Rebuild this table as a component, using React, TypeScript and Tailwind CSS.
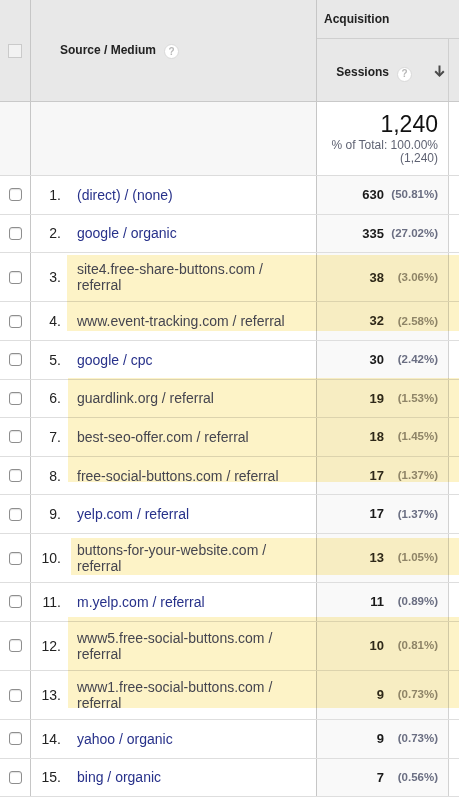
import React from "react";

type Row = { n: number; src: string[]; v: number; p: string; hl?: boolean };

const rows: Row[] = [
  { n: 1, src: ["(direct) / (none)"], v: 630, p: "50.81%" },
  { n: 2, src: ["google / organic"], v: 335, p: "27.02%" },
  { n: 3, src: ["site4.free-share-buttons.com /", "referral"], v: 38, p: "3.06%", hl: true },
  { n: 4, src: ["www.event-tracking.com / referral"], v: 32, p: "2.58%", hl: true },
  { n: 5, src: ["google / cpc"], v: 30, p: "2.42%" },
  { n: 6, src: ["guardlink.org / referral"], v: 19, p: "1.53%", hl: true },
  { n: 7, src: ["best-seo-offer.com / referral"], v: 18, p: "1.45%", hl: true },
  { n: 8, src: ["free-social-buttons.com / referral"], v: 17, p: "1.37%", hl: true },
  { n: 9, src: ["yelp.com / referral"], v: 17, p: "1.37%" },
  { n: 10, src: ["buttons-for-your-website.com /", "referral"], v: 13, p: "1.05%", hl: true },
  { n: 11, src: ["m.yelp.com / referral"], v: 11, p: "0.89%" },
  { n: 12, src: ["www5.free-social-buttons.com /", "referral"], v: 10, p: "0.81%", hl: true },
  { n: 13, src: ["www1.free-social-buttons.com /", "referral"], v: 9, p: "0.73%", hl: true },
  { n: 14, src: ["yahoo / organic"], v: 9, p: "0.73%" },
  { n: 15, src: ["bing / organic"], v: 7, p: "0.56%" },
];

function Help() {
  return (
    <span className="inline-flex w-[15px] h-[15px] rounded-full bg-white border border-[#d9d9d9] items-center justify-center text-[10px] font-bold text-[#b8b8b8] leading-none">
      ?
    </span>
  );
}

export default function App() {
  return (
    <div className="relative w-[459px] h-[797px] overflow-hidden bg-white font-['Liberation_Sans',Arial,sans-serif]">
      {/* Header */}
      <div className="flex h-[102px] border-b border-[#c9c9c9] bg-[#e8e8e8]">
        <div className="w-[31px] shrink-0 border-r border-[#c6c6c6] flex items-center justify-center">
          <div className="w-[14px] h-[14px] border border-[#cacaca] bg-[#f2f2f2]" />
        </div>
        <div className="w-[286px] shrink-0 border-r border-[#c6c6c6] flex items-center pl-[29px] pb-[2px]">
          <span className="text-[12px] font-bold text-[#222]">Source / Medium</span>
          <span className="ml-[8px]">
            <Help />
          </span>
        </div>
        <div className="flex-1 flex flex-col">
          <div className="h-[39px] border-b border-[#cfcfcf] flex items-center pl-[7px]">
            <span className="text-[12px] font-bold text-[#222]">Acquisition</span>
          </div>
          <div className="flex-1 flex">
            <div className="w-[132px] shrink-0 border-r border-[#cfcfcf] flex items-center justify-end pr-[3px] pt-[4px]">
              <span className="text-[12px] font-bold text-[#222]">Sessions</span>
              <span className="ml-[8px]">
                <Help />
              </span>
              <svg className="ml-[22px] mb-[3px]" width="11" height="12" viewBox="0 0 11 12">
                <path d="M5.5 0.5 V10.5" stroke="#4a4a4a" strokeWidth="2" fill="none" />
                <path d="M1.2 6.2 L5.5 10.6 L9.8 6.2" stroke="#4a4a4a" strokeWidth="2" fill="none" />
              </svg>
            </div>
            <div className="flex-1" />
          </div>
        </div>
      </div>

      {/* Totals */}
      <div className="flex h-[74px] border-b border-[#dcdcdc]">
        <div className="w-[31px] shrink-0 border-r border-[#c6c6c6] bg-[#f7f7f7]" />
        <div className="w-[286px] shrink-0 border-r border-[#c6c6c6] bg-[#f7f7f7]" />
        <div className="w-[132px] shrink-0 border-r border-[#d2d2d2] bg-white flex flex-col items-end pr-[10px] pt-[10px]">
          <div className="text-[23px] leading-[24px] text-[#111]">1,240</div>
          <div className="mt-[3px] text-[12px] leading-[13px] text-[#5f6373] text-right">
            % of Total: 100.00%
            <br />
            (1,240)
          </div>
        </div>
        <div className="flex-1 bg-white" />
      </div>

      {/* Rows */}
      {rows.map((r) => {
        const two = r.src.length > 1;
        return (
          <div
            key={r.n}
            className={`flex border-b border-[#dedede] ${two ? "h-[49.2px]" : "h-[38.6px]"}`}
          >
            <div className="w-[31px] shrink-0 border-r border-[#c6c6c6] flex items-center justify-center">
              <div className="w-[13px] h-[13px] rounded-[3px] border border-[#8e8e8e] bg-white shadow-[inset_0_1px_1px_rgba(0,0,0,0.12)]" />
            </div>
            <div className="w-[286px] shrink-0 border-r border-[#c6c6c6] flex items-center">
              <span className="w-[30px] text-right text-[14px] leading-[16px] text-[#222]">{r.n}.</span>
              <span
                className={`relative z-10 ml-[16px] whitespace-nowrap text-[14px] leading-[16px] ${
                  r.hl ? "text-[#45454f]" : "text-[#27318a]"
                }`}
              >
                {r.src.map((l, i) => (
                  <React.Fragment key={i}>
                    {i > 0 && <br />}
                    {l}
                  </React.Fragment>
                ))}
              </span>
            </div>
            <div className="w-[132px] shrink-0 border-r border-[#d2d2d2] bg-[#f9f9f9] flex items-center justify-end pr-[10px]">
              <span
                className={`relative z-10 text-[13px] font-bold ${r.hl ? "text-[#2e2818]" : "text-[#1a1a1a]"}`}
              >
                {r.v}
              </span>
              <span
                className={`relative z-10 w-[54px] text-right text-[11.5px] font-bold ${
                  r.hl ? "text-[#8e8467]" : "text-[#6a6e82]"
                }`}
              >
                ({r.p})
              </span>
            </div>
            <div className="flex-1 bg-white" />
          </div>
        );
      })}

      {/* Highlighter marks */}
      <div className="pointer-events-none absolute left-[67px] right-0 top-[255px] h-[76px] bg-[#fdf3c7] mix-blend-multiply" />
      <div className="pointer-events-none absolute left-[68px] right-0 top-[378px] h-[104px] bg-[#fdf3c7] mix-blend-multiply" />
      <div className="pointer-events-none absolute left-[71px] right-0 top-[538px] h-[37px] bg-[#fdf3c7] mix-blend-multiply" />
      <div className="pointer-events-none absolute left-[68px] right-0 top-[617px] h-[91px] bg-[#fdf3c7] mix-blend-multiply" />
    </div>
  );
}
